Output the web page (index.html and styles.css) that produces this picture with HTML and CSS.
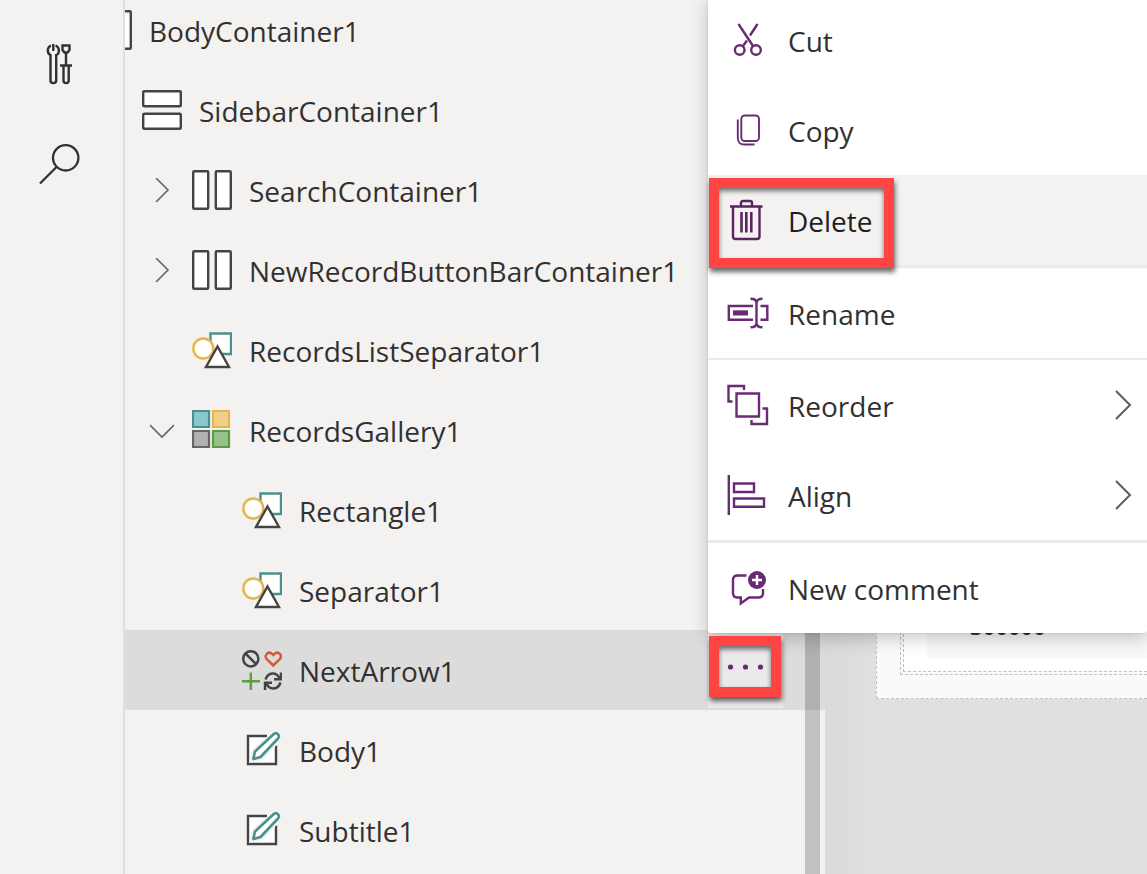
FILE: index.html
```html
<!DOCTYPE html>
<html lang="en">
<head>
<meta charset="utf-8">
<meta name="viewport" content="width=device-width, initial-scale=1">
<title>Tree view</title>
<link rel="stylesheet" href="styles.css">
</head>
<body>
<svg class="defs" aria-hidden="true">
  <symbol id="i-vertical" viewBox="0 0 40 40"><g fill="#fff" stroke="#444" stroke-width="2.400"><rect x="1.200" y="1.200" width="37.600" height="15" rx="1"/><rect x="1.200" y="23.800" width="37.600" height="15" rx="1"/></g></symbol>
  <symbol id="i-horizontal" viewBox="0 0 40 40"><g fill="#fff" stroke="#444" stroke-width="2.400"><rect x="1.200" y="1.200" width="15" height="37.600" rx="1"/><rect x="23.800" y="1.200" width="15" height="37.600" rx="1"/></g></symbol>
  <symbol id="i-shapes" viewBox="0 0 40 40"><g fill="#fff" stroke-width="2.400"><path stroke="#4a908e" d="M18.500 3.500H39V24H18.500z"/><circle stroke="#e8b54d" cx="11.300" cy="18.500" r="10"/><path stroke="#444" d="M25.500 16.500L37 37H14z"/></g></symbol>
  <symbol id="i-gallery" viewBox="0 0 40 40"><g stroke-width="2.200"><path fill="#8ac8c9" stroke="#4a908e" d="M1 1h16v16H1z"/><path fill="#efd08a" stroke="#e8b54d" d="M21 1h16v16H21z"/><path fill="#b1b1b1" stroke="#666" d="M1 21h16v16H1z"/><path fill="#97c18d" stroke="#5c9a45" d="M21 21h16v16H21z"/></g></symbol>
  <symbol id="i-icons" viewBox="0 0 40 40"><g fill="none" stroke-width="2.500"><g stroke="#444"><circle cx="8.800" cy="8.800" r="7.600"/><path d="M3.500 3.500l10.700 10.700"/><path d="M23.500 29.500C26 22 34.500 21.500 37.500 28.500M39 22.500V29.300H32"/><path d="M38.500 32.500C36 40 27.500 40.500 24.500 33.500M23 40V32.800H30"/></g><path stroke="#dc5a32" d="M31.300 15.500L24.500 8.800C21.800 5.500 26.500 -.5 31.300 5C36.200 -.5 41 5.500 38 8.800z"/><path stroke="#5c9e44" d="M0 31.200H18M8.800 22.500V40"/></g></symbol>
  <symbol id="i-edit" viewBox="0 0 40 40"><path fill="#fff" d="M5 5H35V35H5z"/><path fill="none" stroke="#444" stroke-width="2.400" d="M25 6H6V34H34V15.500"/><path fill="#fff" stroke="#f3f2f1" stroke-width="6" d="M11 29l2-8L32 4.500c3-2.500 7 1 4.500 4.200L19 27z"/><path fill="#fff" stroke="#4a908e" stroke-width="2.600" stroke-linejoin="round" d="M11.300 29L13 21.500L31.500 4.200C34.500 1.300 38.500 5.500 36 8.500L18.500 27z"/></symbol>
  <symbol id="i-right" viewBox="0 0 24 24"><path fill="none" stroke="#666" stroke-width="1.600" d="M6 0L18 12L6 24"/></symbol>
  <symbol id="i-down" viewBox="0 0 24 24"><path fill="none" stroke="#666" stroke-width="1.600" d="M0 7L12 19L24 7"/></symbol>
</svg>

<div class="app">
  <nav class="rail" aria-label="Tools">
    <button class="rail-button" type="button" aria-label="Advanced tools"><svg class="icon" viewBox="0 0 40 40"><g fill="none" stroke="#323130" stroke-width="2.400"><path d="M11 1.500C6.800 3.200 6.800 9.500 10.500 11V36.500C10.500 40 16.200 40 16.200 36.500V11C20 9.500 19.800 3.200 15.600 1.500M13.300 0V7"/><path d="M22.500 1.500h7v4.500l-2 2.500h-3l-2-2.500zM26 8.500V21M20 21.500H32M23.500 22V36.500C23.500 40 28.700 40 28.700 36.500V22"/></g></svg></button>
    <button class="rail-button" type="button" aria-label="Search"><svg class="icon" viewBox="0 0 40 40"><g fill="none" stroke="#323130" stroke-width="2.300"><circle cx="25.700" cy="13.800" r="12.700"/><path d="M17 22.500L0 39.500"/></g></svg></button>
  </nav>

  <section class="panel" aria-label="Tree view">
    <ul class="tree">
      <li class="row level-0"><span class="toggle"></span><svg class="icon"><use href="#i-horizontal"/></svg><span class="label">BodyContainer1</span></li>
      <li class="row level-1"><span class="toggle"></span><svg class="icon"><use href="#i-vertical"/></svg><span class="label">SidebarContainer1</span></li>
      <li class="row level-2"><button class="toggle" type="button" aria-label="Expand SearchContainer1"><svg class="chevron"><use href="#i-right"/></svg></button><svg class="icon"><use href="#i-horizontal"/></svg><span class="label">SearchContainer1</span></li>
      <li class="row level-2"><button class="toggle" type="button" aria-label="Expand NewRecordButtonBarContainer1"><svg class="chevron"><use href="#i-right"/></svg></button><svg class="icon"><use href="#i-horizontal"/></svg><span class="label">NewRecordButtonBarContainer1</span></li>
      <li class="row level-2"><span class="toggle"></span><svg class="icon"><use href="#i-shapes"/></svg><span class="label">RecordsListSeparator1</span></li>
      <li class="row level-2"><button class="toggle" type="button" aria-label="Collapse RecordsGallery1"><svg class="chevron"><use href="#i-down"/></svg></button><svg class="icon"><use href="#i-gallery"/></svg><span class="label">RecordsGallery1</span></li>
      <li class="row level-3"><span class="toggle"></span><svg class="icon"><use href="#i-shapes"/></svg><span class="label">Rectangle1</span></li>
      <li class="row level-3"><span class="toggle"></span><svg class="icon"><use href="#i-shapes"/></svg><span class="label">Separator1</span></li>
      <li class="row level-3 selected"><span class="toggle"></span><svg class="icon"><use href="#i-icons"/></svg><span class="label">NextArrow1</span>
        <button class="more" type="button" aria-label="More actions"><svg class="icon" viewBox="0 0 40 40"><g fill="#692b73"><circle cx="4.500" cy="20" r="2.600"/><circle cx="19.500" cy="20" r="2.600"/><circle cx="34.500" cy="20" r="2.600"/></g></svg></button></li>
      <li class="row level-3"><span class="toggle"></span><svg class="icon"><use href="#i-edit"/></svg><span class="label">Body1</span></li>
      <li class="row level-3"><span class="toggle"></span><svg class="icon"><use href="#i-edit"/></svg><span class="label">Subtitle1</span></li>
    </ul>
    <div class="scrollbar"></div>
  </section>

  <main class="canvas">
    <div class="screen"><div class="form"><div class="card"><div class="field">300000</div></div></div></div>
  </main>
</div>

<div class="menu" role="menu">
  <button class="item" type="button" role="menuitem"><svg class="icon" viewBox="0 0 40 40"><circle cx="11.700" cy="30" r="4.800"/><circle cx="28" cy="30" r="4.800"/><path d="M10.500 4L25 26M29.500 4L22 15.500M19 20.500L15 26"/></svg><span class="label">Cut</span></button>
  <button class="item" type="button" role="menuitem"><svg class="icon" viewBox="0 0 40 40"><g stroke-width="1.900"><rect x="13.300" y="5.500" width="17.700" height="25.500" rx="3.500"/><path d="M9.800 9.500V28C9.800 32 12.500 34.500 16 34.500H26.500"/></g></svg><span class="label">Copy</span></button>
  <button class="item active" type="button" role="menuitem"><svg class="icon" viewBox="0 0 40 40"><path d="M2 6.500H34.600M13 6V3Q13 1 15 1H22Q24 1 24 3V6M5 6.500V36.500Q5 39 7.500 39H29Q31.500 39 31.500 36.500V6.500"/><path stroke-width="2.600" d="M13.500 12V32.500M18.300 12V32.500M23.300 12V32.500"/></svg><span class="label">Delete</span><span class="callout callout-item"></span></button>
  <hr class="rule">
  <button class="item" type="button" role="menuitem"><svg class="icon" viewBox="0 0 40 40"><path d="M25 13H.8V26.800H25M32.500 13H39.300V26.800H32.500M28.500 8.500V31.500M22.500 5.800C26 5.800 28.500 7 28.500 10C28.500 7 31 5.800 34.500 5.800M22.500 34.300C26 34.300 28.500 33 28.500 30C28.500 33 31 34.300 34.500 34.300"/><path class="solid" d="M5 17.300H20V22.500H5z"/></svg><span class="label">Rename</span></button>
  <hr class="rule thin">
  <button class="item" type="button" role="menuitem"><svg class="icon" viewBox="0 0 40 40"><path d="M16 5V1H.5V16.500H4.500M8.500 8.500H31V31.500H8.500zM34.500 23.500H39V39H23.500V35"/></svg><span class="label">Reorder</span><svg class="submenu" viewBox="0 0 18 30"><path d="M1 1L15 15L1 29"/></svg></button>
  <button class="item" type="button" role="menuitem"><svg class="icon" viewBox="0 0 40 40"><path d="M.8 0V40M6 8.500H26V17H6zM6 23.500H36V31.800H6z"/></svg><span class="label">Align</span><svg class="submenu" viewBox="0 0 18 30"><path d="M1 1L15 15L1 29"/></svg></button>
  <hr class="rule">
  <button class="item" type="button" role="menuitem"><svg class="icon" viewBox="0 0 40 40"><path d="M18.500 7.500H9.500Q5 7.500 5 12V25Q5 29.500 9 29.500H12.800V35.500L21 29.500H30.500Q35 29.500 35 25.500V21"/><circle class="solid" cx="29" cy="12" r="9"/><path stroke="#fff" d="M24 12H34M29 7V17"/></svg><span class="label">New comment</span></button>
</div>
<div class="callout callout-more"></div>
</body>
</html>
```
FILE: styles.css
```css
* { box-sizing: border-box; }

body {
  position: relative;
  margin: 0;
  height: 100vh;
  overflow: hidden;
  background: #f3f2f1;
  color: #323130;
  font-family: "Open Sans", "Noto Sans", sans-serif;
  font-size: 28px;
  line-height: 38px;
}

button {
  margin: 0;
  padding: 0;
  border: 0;
  background: none;
  color: inherit;
  font: inherit;
}

.defs { position: absolute; width: 0; height: 0; }

.icon { display: block; flex: none; width: 40px; height: 40px; overflow: visible; }

.label { padding-top: 2px; white-space: nowrap; }

.app { display: flex; height: 100%; }

.rail {
  flex: none;
  width: 125px;
  padding: 14px 3px 0 0;
  border-right: 2px solid #e1dfdd;
}

.rail-button {
  display: flex;
  align-items: center;
  justify-content: center;
  width: 100%;
  height: 100px;
}

.panel {
  position: relative;
  flex: none;
  width: 700px;
  overflow: hidden;
}

.tree { list-style: none; margin: -10px 0 0 -75px; padding: 0; }

.row { display: flex; align-items: center; height: 80px; }
.level-1 { padding-left: 50px; }
.level-2 { padding-left: 100px; }
.level-3 { padding-left: 150px; }
.selected { background: #dcdcdc; }

.row .label { margin-left: 17px; }

.toggle { flex: none; width: 24px; margin-right: 18px; }
.chevron { display: block; width: 24px; height: 24px; overflow: visible; }

.more {
  display: flex;
  align-items: center;
  justify-content: center;
  width: 75px;
  height: 76px;
  margin: 0 42px 0 auto;
  padding-bottom: 6px;
  background: #eaeaea;
}

.scrollbar {
  position: absolute;
  top: 0;
  right: 5px;
  bottom: 0;
  width: 15px;
  background: rgba(0, 0, 0, 0.2);
}

.canvas {
  flex: 1;
  min-width: 0;
  padding-left: 51px;
  overflow: hidden;
  background: linear-gradient(90deg, #dadada, #e0e0e0 50px);
}

.screen {
  height: 699px;
  padding: 0 0 23px 23px;
  border: 1px dashed #c0c0c0;
  border-width: 0 0 1px 1px;
  background: #fafafa;
}

.form {
  height: 100%;
  padding: 0 0 2px 2px;
  border: 1px dashed #c0c0c0;
  border-width: 0 0 1px 1px;
}

.card {
  height: 100%;
  padding: 0 0 12px 23px;
  border: 1px dashed #c0c0c0;
  border-width: 0 0 1px 1px;
  background: #fff;
}

.field {
  display: flex;
  align-items: flex-end;
  height: 100%;
  padding: 0 0 14px 43px;
  background: #f8f8f8;
  font-size: 22px;
  font-weight: 600;
}

.menu {
  position: absolute;
  top: -5px;
  left: 708px;
  right: 0;
  border-radius: 0 0 3px 3px;
  background: #fff;
  box-shadow: 0 6px 18px rgba(0, 0, 0, 0.2), 0 0 3px rgba(0, 0, 0, 0.12);
}

.item {
  position: relative;
  display: flex;
  align-items: center;
  gap: 20px;
  width: 100%;
  height: 90px;
  padding: 0 14px 0 20px;
  text-align: left;
}

.active { background: #f3f2f1; color: #201f1e; }

.item .icon { fill: none; stroke: #692b73; stroke-width: 2.4px; }
.active .icon { stroke: #5a2463; }
.item .solid { fill: #692b73; stroke: none; }

.submenu {
  width: 18px;
  height: 30px;
  margin-left: auto;
  fill: none;
  stroke: #605e5c;
  stroke-width: 2;
}

.rule { height: 3px; margin: 0; border: 0; background: #eaeaea; }
.thin { height: 2px; }

.callout {
  position: absolute;
  z-index: 1;
  border: 10px solid #ff4444;
  box-shadow: 1px 4px 5px rgba(0, 0, 0, 0.6), inset 0 3px 5px rgba(0, 0, 0, 0.55);
}

.callout-item { top: 3px; left: 1px; width: 185px; height: 90px; }
.callout-more { top: 636px; left: 709px; width: 72px; height: 61px; }
```
